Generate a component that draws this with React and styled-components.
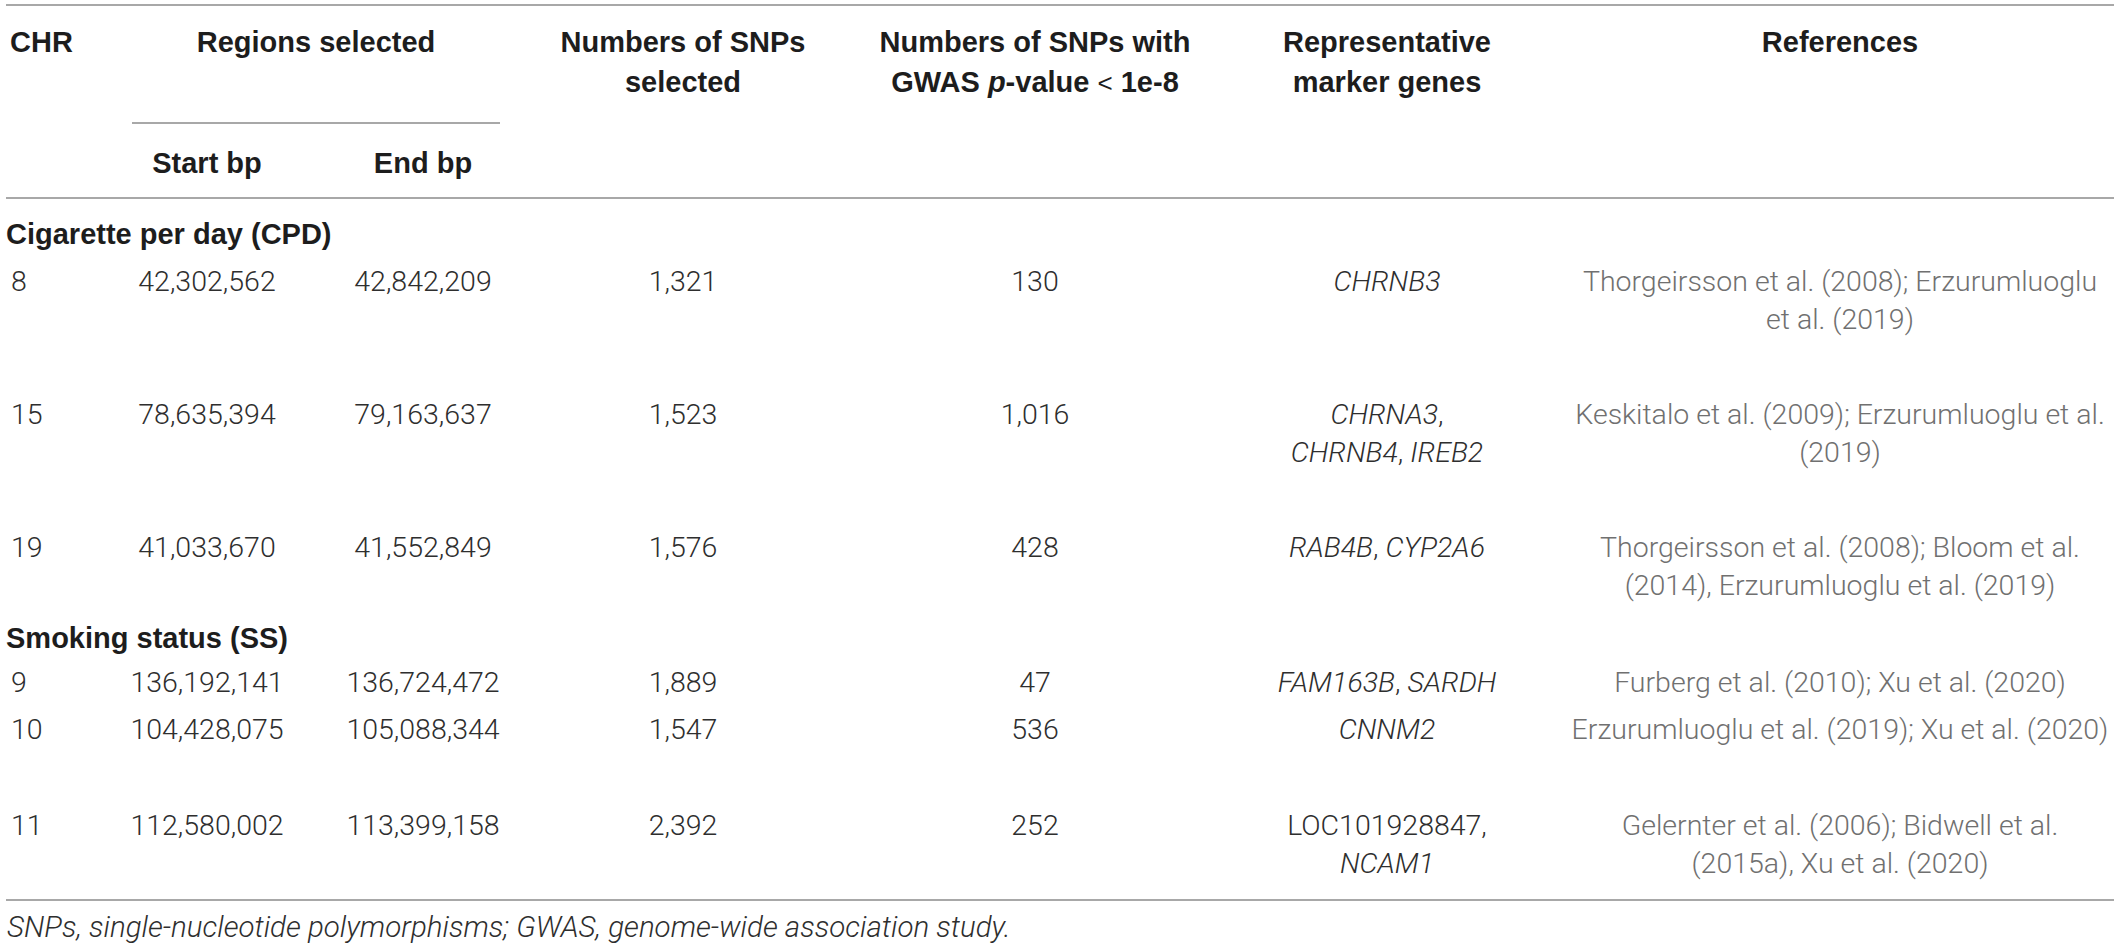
import styled, { createGlobalStyle } from 'styled-components';

const GlobalStyle = createGlobalStyle`
  body {
    margin: 0;
    background: #fff;
    font-family: "Liberation Sans", Arial, Helvetica, sans-serif;
  }
`;

const Page = styled.div`
  padding: 4px 0 0 6px;
`;

const Table = styled.table`
  width: 2108px;
  table-layout: fixed;
  border-collapse: separate;
  border-spacing: 0;
  border-top: 2px solid #a8a8a8;
  border-bottom: 2px solid #a8a8a8;
`;

const HeadCell = styled.th`
  font-size: 29px;
  font-weight: 700;
  line-height: 40px;
  color: #1d1d1d;
  vertical-align: top;
  text-align: ${(p) => p.$align || 'center'};
  padding: ${(p) => p.$pad || '16px 0 0'};
  border-bottom: ${(p) => (p.$rule ? '2px solid #a8a8a8' : 'none')};
  white-space: nowrap;
`;

const SubRule = styled.div`
  margin: 0 31px 0 33px;
  padding-bottom: 60px;
  border-bottom: 2px solid #a8a8a8;
`;

const Thin = styled.span`
  font-weight: 400;
  font-size: 26px;
`;

const Cell = styled.td`
  font-family: Roboto, "Liberation Sans", Arial, sans-serif;
  font-weight: 300;
  font-size: 28.5px;
  line-height: 38px;
  color: #2e2e2e;
  vertical-align: top;
  white-space: nowrap;
  text-align: ${(p) => p.$align || 'center'};
  padding: ${(p) => `${p.$pt}px 0 ${p.$pb}px ${p.$left || 0}px`};
`;

const RefCell = styled(Cell)`
  color: #707070;
`;

const GroupCell = styled.td`
  font-size: 29px;
  font-weight: 700;
  line-height: 38px;
  color: #1d1d1d;
  text-align: left;
  padding: ${(p) => `${p.$pt}px 0 0 0`};
`;

const Gene = styled.i`
  font-style: italic;
`;

const Footnote = styled.p`
  margin: 7px 0 0 1px;
  font-family: Roboto, "Liberation Sans", Arial, sans-serif;
  font-weight: 300;
  font-size: 29.5px;
  line-height: 38px;
  font-style: italic;
  color: #2e2e2e;
`;

const groups = [
  {
    title: 'Cigarette per day (CPD)',
    pt: 16,
    rows: [
      {
        chr: '8', start: '42,302,562', end: '42,842,209', sel: '1,321', gwas: '130',
        genes: <Gene>CHRNB3</Gene>,
        refs: ['Thorgeirsson et al. (2008); Erzurumluoglu', 'et al. (2019)'],
        pt: 10, pb: 47,
      },
      {
        chr: '15', start: '78,635,394', end: '79,163,637', sel: '1,523', gwas: '1,016',
        genes: <><Gene>CHRNA3</Gene>,<br /><Gene>CHRNB4</Gene>, <Gene>IREB2</Gene></>,
        refs: ['Keskitalo et al. (2009); Erzurumluoglu et al.', '(2019)'],
        pt: 10, pb: 47,
      },
      {
        chr: '19', start: '41,033,670', end: '41,552,849', sel: '1,576', gwas: '428',
        genes: <><Gene>RAB4B</Gene>, <Gene>CYP2A6</Gene></>,
        refs: ['Thorgeirsson et al. (2008); Bloom et al.', '(2014), Erzurumluoglu et al. (2019)'],
        pt: 10, pb: 4,
      },
    ],
  },
  {
    title: 'Smoking status (SS)',
    pt: 10,
    rows: [
      {
        chr: '9', start: '136,192,141', end: '136,724,472', sel: '1,889', gwas: '47',
        genes: <><Gene>FAM163B</Gene>, <Gene>SARDH</Gene></>,
        refs: ['Furberg et al. (2010); Xu et al. (2020)'],
        pt: 7, pb: 0,
      },
      {
        chr: '10', start: '104,428,075', end: '105,088,344', sel: '1,547', gwas: '536',
        genes: <Gene>CNNM2</Gene>,
        refs: ['Erzurumluoglu et al. (2019); Xu et al. (2020)'],
        pt: 9, pb: 50,
      },
      {
        chr: '11', start: '112,580,002', end: '113,399,158', sel: '2,392', gwas: '252',
        genes: <>LOC101928847,<br /><Gene>NCAM1</Gene></>,
        refs: ['Gelernter et al. (2006); Bidwell et al.', '(2015a), Xu et al. (2020)'],
        pt: 8, pb: 16,
      },
    ],
  },
];

const DataRow = ({ row }) => {
  const { pt, pb } = row;
  return (
    <tr>
      <Cell $align="left" $left={5} $pt={pt} $pb={pb}>{row.chr}</Cell>
      <Cell $pt={pt} $pb={pb}>{row.start}</Cell>
      <Cell $pt={pt} $pb={pb}>{row.end}</Cell>
      <Cell $pt={pt} $pb={pb}>{row.sel}</Cell>
      <Cell $pt={pt} $pb={pb}>{row.gwas}</Cell>
      <Cell $pt={pt} $pb={pb}>{row.genes}</Cell>
      <RefCell $left={27} $pt={pt} $pb={pb}>
        {row.refs.map((line, i) => (
          <div key={i}>{line}</div>
        ))}
      </RefCell>
    </tr>
  );
};

const App = () => {
  return (
    <Page>
      <GlobalStyle />
      <Table>
        <colgroup>
          <col style={{ width: 93 }} />
          <col style={{ width: 216 }} />
          <col style={{ width: 216 }} />
          <col style={{ width: 304 }} />
          <col style={{ width: 400 }} />
          <col style={{ width: 304 }} />
          <col style={{ width: 575 }} />
        </colgroup>
        <thead>
          <tr>
            <HeadCell rowSpan={2} $align="left" $pad="16px 0 0 4px" $rule>CHR</HeadCell>
            <HeadCell colSpan={2}>
              <SubRule>Regions selected</SubRule>
            </HeadCell>
            <HeadCell rowSpan={2} $rule>Numbers of SNPs<br />selected</HeadCell>
            <HeadCell rowSpan={2} $rule>
              Numbers of SNPs with<br />GWAS <i>p</i>-value <Thin>&lt;</Thin> 1e-8
            </HeadCell>
            <HeadCell rowSpan={2} $rule>Representative<br />marker genes</HeadCell>
            <HeadCell rowSpan={2} $pad="16px 0 0 27px" $rule>References</HeadCell>
          </tr>
          <tr>
            <HeadCell $pad="19px 0 14px" $rule>Start bp</HeadCell>
            <HeadCell $pad="19px 0 14px" $rule>End bp</HeadCell>
          </tr>
        </thead>
        {groups.map((group) => (
          <tbody key={group.title}>
            <tr>
              <GroupCell colSpan={7} $pt={group.pt}>{group.title}</GroupCell>
            </tr>
            {group.rows.map((row) => (
              <DataRow key={row.chr} row={row} />
            ))}
          </tbody>
        ))}
      </Table>
      <Footnote>SNPs, single-nucleotide polymorphisms; GWAS, genome-wide association study.</Footnote>
    </Page>
  );
};

export default App;
